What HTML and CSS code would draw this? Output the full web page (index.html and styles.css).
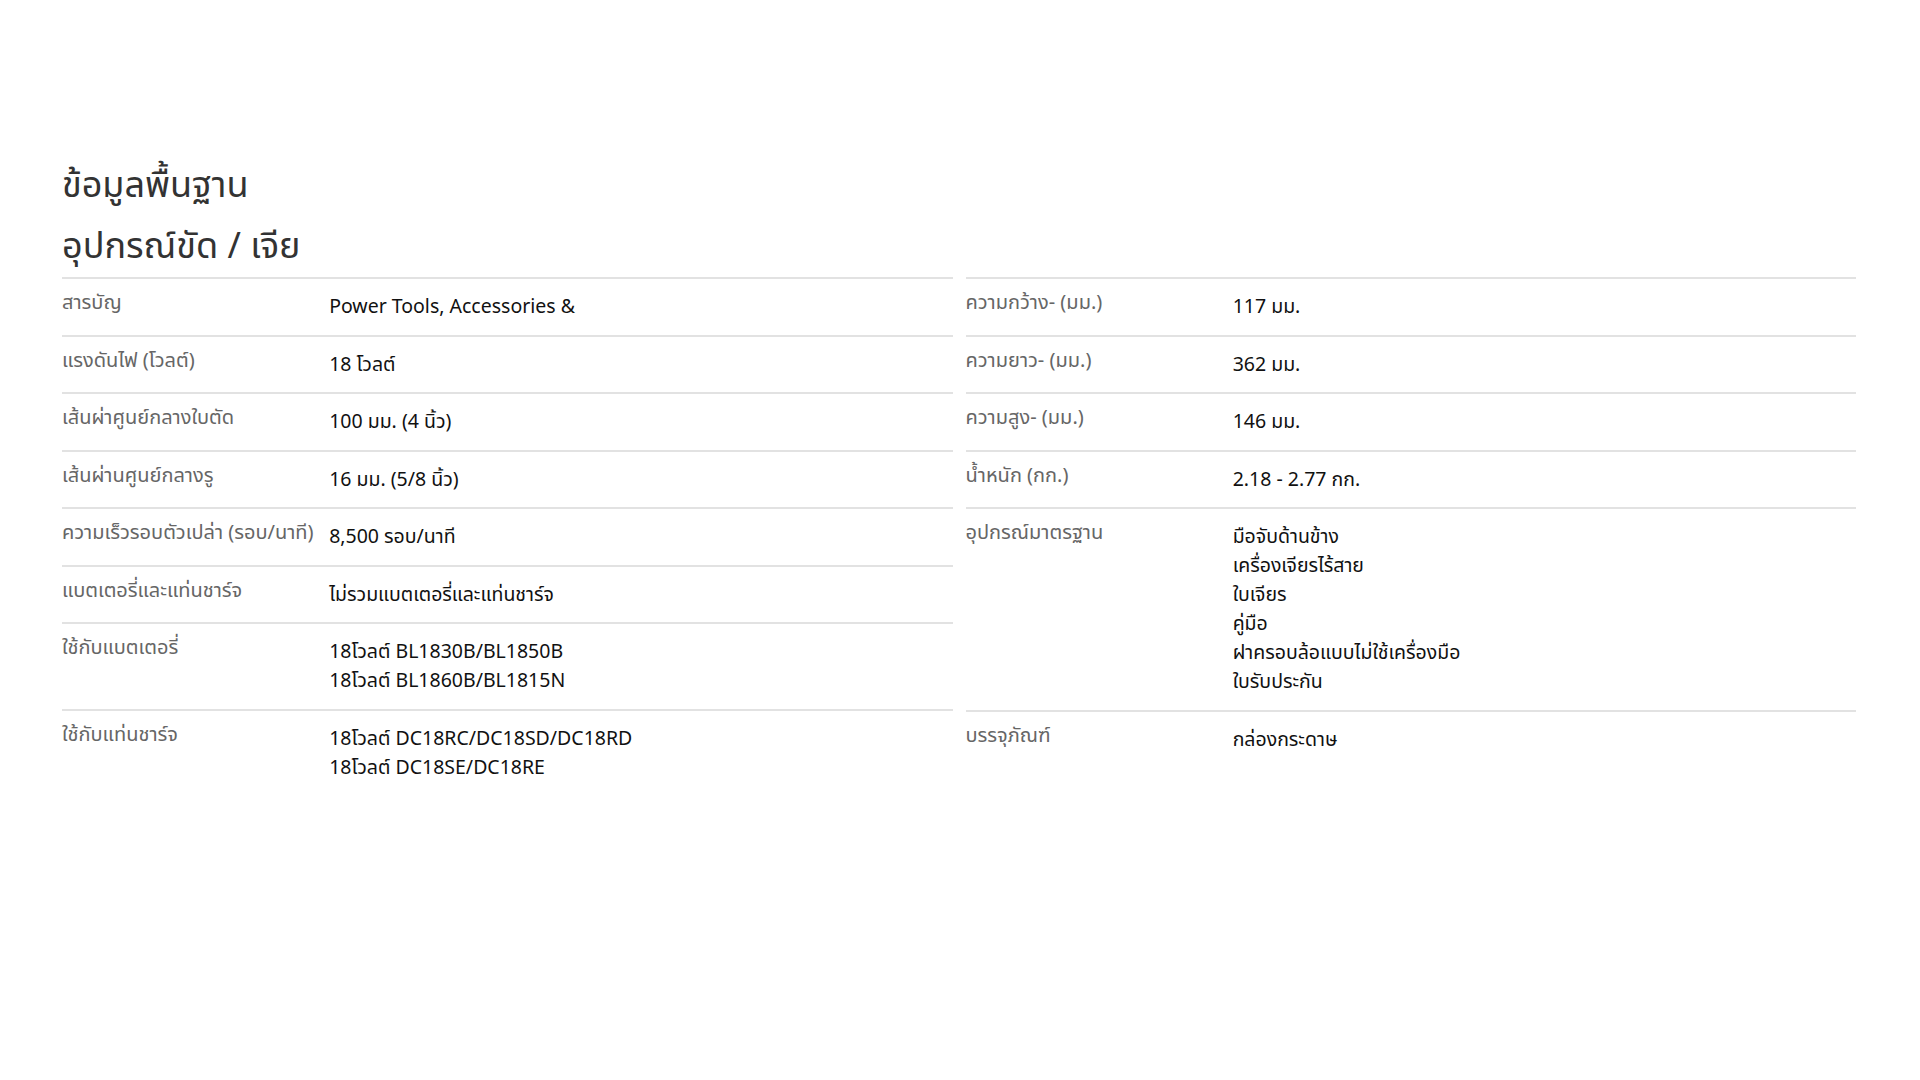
FILE: index.html
```html
<!DOCTYPE html>
<html lang="th">
<head>
    <meta charset="UTF-8">
    <meta name="viewport" content="width=device-width, initial-scale=1.0">
    <title>ข้อมูลพื้นฐาน</title>
    <link rel="stylesheet" href="styles.css">
</head>
<body>
    <div class="container">
        <h2 class="section-title">ข้อมูลพื้นฐาน</h2>
        <h2 class="section-title">อุปกรณ์ขัด / เจีย</h2>

        <div class="spec-grid">
            <div class="spec-col">
                <div class="spec-row">
                    <div class="spec-label">สารบัญ</div>
                    <div class="spec-value">Power Tools, Accessories &amp;</div>
                </div>
                <div class="spec-row">
                    <div class="spec-label">แรงดันไฟ (โวลต์)</div>
                    <div class="spec-value">18 โวลต์</div>
                </div>
                <div class="spec-row">
                    <div class="spec-label">เส้นผ่าศูนย์กลางใบตัด</div>
                    <div class="spec-value">100 มม. (4 นิ้ว)</div>
                </div>
                <div class="spec-row">
                    <div class="spec-label">เส้นผ่านศูนย์กลางรู</div>
                    <div class="spec-value">16 มม. (5/8 นิ้ว)</div>
                </div>
                <div class="spec-row">
                    <div class="spec-label">ความเร็วรอบตัวเปล่า (รอบ/นาที)</div>
                    <div class="spec-value">8,500 รอบ/นาที</div>
                </div>
                <div class="spec-row">
                    <div class="spec-label">แบตเตอรี่และแท่นชาร์จ</div>
                    <div class="spec-value">ไม่รวมแบตเตอรี่และแท่นชาร์จ</div>
                </div>
                <div class="spec-row">
                    <div class="spec-label">ใช้กับแบตเตอรี่</div>
                    <div class="spec-value">
                        <div>18โวลต์ BL1830B/BL1850B</div>
                        <div>18โวลต์ BL1860B/BL1815N</div>
                    </div>
                </div>
                <div class="spec-row">
                    <div class="spec-label">ใช้กับแท่นชาร์จ</div>
                    <div class="spec-value">
                        <div>18โวลต์ DC18RC/DC18SD/DC18RD</div>
                        <div>18โวลต์ DC18SE/DC18RE</div>
                    </div>
                </div>
            </div>

            <div class="spec-col">
                <div class="spec-row">
                    <div class="spec-label">ความกว้าง- (มม.)</div>
                    <div class="spec-value">117 มม.</div>
                </div>
                <div class="spec-row">
                    <div class="spec-label">ความยาว- (มม.)</div>
                    <div class="spec-value">362 มม.</div>
                </div>
                <div class="spec-row">
                    <div class="spec-label">ความสูง- (มม.)</div>
                    <div class="spec-value">146 มม.</div>
                </div>
                <div class="spec-row">
                    <div class="spec-label">น้ำหนัก (กก.)</div>
                    <div class="spec-value">2.18 - 2.77 กก.</div>
                </div>
                <div class="spec-row">
                    <div class="spec-label">อุปกรณ์มาตรฐาน</div>
                    <div class="spec-value">
                        <div>มือจับด้านข้าง</div>
                        <div>เครื่องเจียรไร้สาย</div>
                        <div>ใบเจียร</div>
                        <div>คู่มือ</div>
                        <div>ฝาครอบล้อแบบไม่ใช้เครื่องมือ</div>
                        <div>ใบรับประกัน</div>
                    </div>
                </div>
                <div class="spec-row">
                    <div class="spec-label">บรรจุภัณฑ์</div>
                    <div class="spec-value">กล่องกระดาษ</div>
                </div>
            </div>
        </div>
    </div>
</body>
</html>
```

FILE: styles.css
```css
* {
    margin: 0;
    padding: 0;
    box-sizing: border-box;
}

body {
    font-family: 'Noto Sans Thai', 'Noto Sans', 'DejaVu Sans', sans-serif;
    background: #ffffff;
    color: #222222;
}

.container {
    padding: 156px 64px 80px 62px;
}

.section-title {
    font-size: 36px;
    font-weight: 400;
    line-height: 61px;
    color: #333333;
}

.spec-grid {
    display: grid;
    grid-template-columns: 1fr 1fr;
    column-gap: 13px;
    align-items: start;
    margin-top: -1px;
}

.spec-row {
    display: grid;
    grid-template-columns: 30% 70%;
    border-top: 2px solid #e2e2e2;
    padding: 12px 0 12.5px;
}

.spec-row:last-child {
    padding-bottom: 14px;
}

.spec-label {
    font-size: 20px;
    line-height: 24px;
    color: #666666;
}

.spec-value {
    font-size: 19.5px;
    line-height: 29px;
    color: #111111;
    padding-top: 2px;
}
```
